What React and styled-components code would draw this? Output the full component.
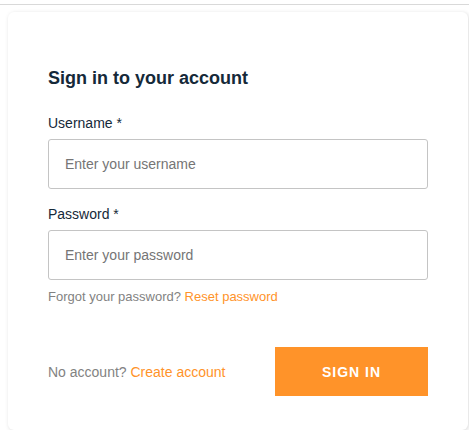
import styled, { createGlobalStyle } from "styled-components";

const GlobalStyle = createGlobalStyle`
    body {
        margin: 0;
        background: #ffffff;
        font-family: "Liberation Sans", Arial, sans-serif;
    }
`;

const TopRule = styled.div`
    margin-top: 4px;
    height: 1px;
    background: #d9d9d9;
`;

const Card = styled.form`
    margin: 7px 1px 0 8px;
    padding: 54px 40px 34px;
    background: #fff;
    border-radius: 6px;
    box-shadow: 1px 1px 4px 0 rgba(0, 0, 0, 0.15);
`;

const Title = styled.h2`
    margin: 0 0 24px;
    font-size: 18px;
    line-height: 24px;
    font-weight: 700;
    color: #152939;
`;

const Field = styled.div`
    margin-bottom: ${(p) => p.$gap || 16}px;
`;

const Label = styled.label`
    display: block;
    margin-bottom: 7px;
    font-size: 14px;
    line-height: 18px;
    color: #152939;
`;

const Input = styled.input`
    box-sizing: border-box;
    display: block;
    width: 100%;
    height: 50px;
    padding: 0 16px;
    border: 1px solid #c4c4c4;
    border-radius: 3px;
    font-family: inherit;
    font-size: 14px;
    color: #152939;
    outline: none;

    &::placeholder {
        color: #757575;
    }
`;

const Hint = styled.div`
    margin-top: 9px;
    font-size: 13px;
    line-height: 16px;
    color: #828282;
`;

const Link = styled.a`
    color: #ff9329;
    cursor: pointer;
    text-decoration: none;
`;

const Footer = styled.div`
    display: flex;
    align-items: center;
    justify-content: space-between;
    margin-top: 42px;
`;

const FooterText = styled.span`
    font-size: 14px;
    color: #828282;
`;

const Button = styled.button`
    width: 153px;
    height: 49px;
    border: none;
    background: #ff9329;
    color: #fff;
    font-family: inherit;
    font-size: 14px;
    font-weight: 700;
    letter-spacing: 1px;
    text-transform: uppercase;
    cursor: pointer;
`;

export default function App() {
    return (
        <>
            <GlobalStyle />
            <TopRule />
            <Card onSubmit={(e) => e.preventDefault()}>
                <Title>Sign in to your account</Title>
                <Field>
                    <Label>Username *</Label>
                    <Input placeholder="Enter your username" />
                </Field>
                <Field $gap={0}>
                    <Label>Password *</Label>
                    <Input type="password" placeholder="Enter your password" />
                    <Hint>
                        Forgot your password? <Link>Reset password</Link>
                    </Hint>
                </Field>
                <Footer>
                    <FooterText>
                        No account? <Link>Create account</Link>
                    </FooterText>
                    <Button type="submit">Sign in</Button>
                </Footer>
            </Card>
        </>
    );
}
